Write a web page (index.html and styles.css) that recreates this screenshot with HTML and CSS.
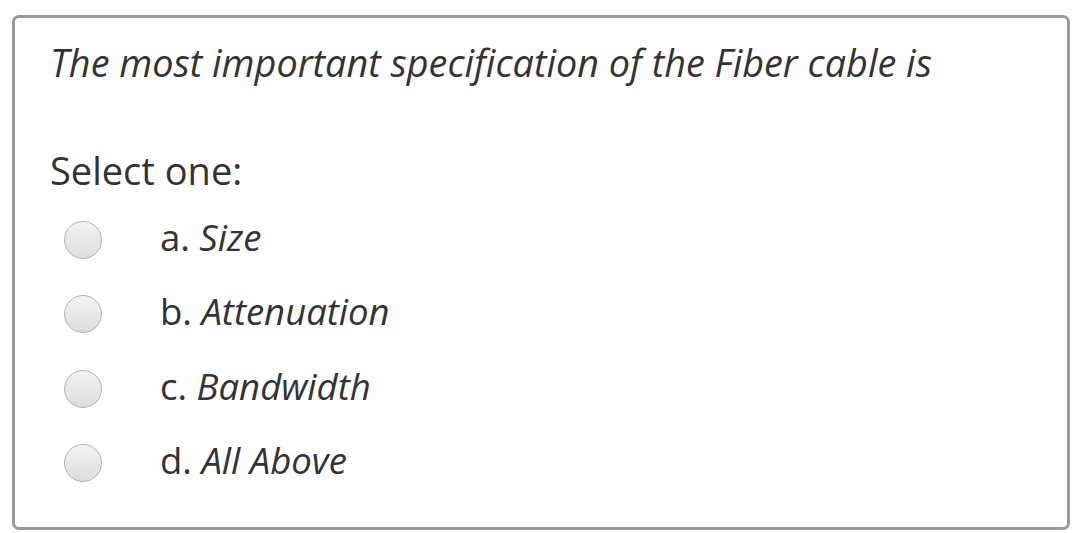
FILE: index.html
```html
<!DOCTYPE html>
<html>
<head>
<meta charset="utf-8">
<link rel="stylesheet" href="styles.css">
</head>
<body>
<div class="card">
  <div class="question">The most important specification of the Fiber cable is</div>
  <div class="prompt">Select one:</div>
  <div class="answers">
    <div class="option"><span class="radio"></span><span class="label">a. <em>Size</em></span></div>
    <div class="option"><span class="radio"></span><span class="label">b. <em>Attenuation</em></span></div>
    <div class="option"><span class="radio"></span><span class="label">c. <em>Bandwidth</em></span></div>
    <div class="option"><span class="radio"></span><span class="label">d. <em>All Above</em></span></div>
  </div>
</div>
</body>
</html>
```
FILE: styles.css
```css
html, body {
  margin: 0;
  padding: 0;
  background: #ffffff;
}
body {
  padding: 15px 10px 3px 12px;
  font-family: "Open Sans", "Liberation Sans", sans-serif;
  color: #333333;
}
.card {
  box-sizing: border-box;
  width: 1058px;
  height: 515px;
  border: 3px solid #999999;
  border-radius: 7px;
  padding: 20px 0 0 35px;
}
.question {
  font-style: italic;
  font-size: 37.8px;
  line-height: 50px;
  color: #333333;
}
.prompt {
  margin-top: 57px;
  font-size: 38px;
  line-height: 50px;
}
.answers {
  display: flex;
  flex-direction: column;
  gap: 24.3px;
  margin-top: 20px;
}
.option {
  display: flex;
  align-items: center;
  height: 50px;
}
.radio {
  box-sizing: border-box;
  width: 38px;
  height: 38px;
  border-radius: 50%;
  border: 1px solid #b3b3b3;
  background: linear-gradient(#f3f3f3, #dcdcdc);
  margin-left: 14px;
  flex: none;
}
.label {
  margin-left: 58px;
  padding-bottom: 6px;
  font-size: 36.5px;
  line-height: 50px;
}
.label em {
  font-style: italic;
}
```
